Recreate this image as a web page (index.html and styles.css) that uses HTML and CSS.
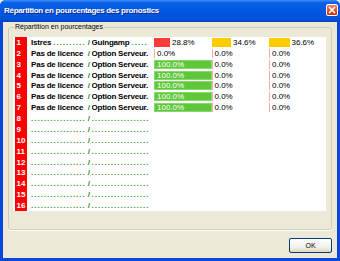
FILE: index.html
```html
<!DOCTYPE html>
<html lang="fr">
<head>
  <meta charset="UTF-8">
  <title>Répartition en pourcentages des pronostics</title>
  <link rel="stylesheet" href="styles.css">
</head>
<body>

<div class="window">
  <div class="titlebar">
    <span class="title">Répartition en pourcentages des pronostics</span>
    <span class="close">
      <svg width="8" height="8" viewBox="0 0 8 8"><path d="M1 1L7 7M7 1L1 7" stroke="#fff" stroke-width="1.6"/></svg>
    </span>
  </div>

  <div class="client">
    <fieldset class="group">
      <legend>Répartition en pourcentages</legend>
      <div class="list">
        <div class="row">
          <span class="num">1</span>
          <span class="team">Istres <span class="dots">..........</span></span>
          <span class="slash">/</span>
          <span class="team team2">Guingamp <span class="dots">.....</span></span>
          <div class="cell"><span class="bar red" style="width:16px"></span><span class="pct">28.8%</span></div>
          <div class="cell"><span class="bar yellow" style="width:19.5px"></span><span class="pct">34.6%</span></div>
          <div class="cell"><span class="bar yellow" style="width:20.5px"></span><span class="pct">36.6%</span></div>
        </div>
        <div class="row">
          <span class="num">2</span>
          <span class="team">Pas de licence</span>
          <span class="slash">/</span>
          <span class="team team2">Option Serveur.</span>
          <div class="cell"><span class="bar zero"></span><span class="pct">0.0%</span></div>
          <div class="cell"><span class="bar zero"></span><span class="pct">0.0%</span></div>
          <div class="cell"><span class="bar zero"></span><span class="pct">0.0%</span></div>
        </div>
        <div class="row">
          <span class="num">3</span>
          <span class="team">Pas de licence</span>
          <span class="slash">/</span>
          <span class="team team2">Option Serveur.</span>
          <div class="cell"><span class="bar green">100.0%</span></div>
          <div class="cell"><span class="bar zero"></span><span class="pct">0.0%</span></div>
          <div class="cell"><span class="bar zero"></span><span class="pct">0.0%</span></div>
        </div>
        <div class="row">
          <span class="num">4</span>
          <span class="team">Pas de licence</span>
          <span class="slash">/</span>
          <span class="team team2">Option Serveur.</span>
          <div class="cell"><span class="bar green">100.0%</span></div>
          <div class="cell"><span class="bar zero"></span><span class="pct">0.0%</span></div>
          <div class="cell"><span class="bar zero"></span><span class="pct">0.0%</span></div>
        </div>
        <div class="row">
          <span class="num">5</span>
          <span class="team">Pas de licence</span>
          <span class="slash">/</span>
          <span class="team team2">Option Serveur.</span>
          <div class="cell"><span class="bar green">100.0%</span></div>
          <div class="cell"><span class="bar zero"></span><span class="pct">0.0%</span></div>
          <div class="cell"><span class="bar zero"></span><span class="pct">0.0%</span></div>
        </div>
        <div class="row">
          <span class="num">6</span>
          <span class="team">Pas de licence</span>
          <span class="slash">/</span>
          <span class="team team2">Option Serveur.</span>
          <div class="cell"><span class="bar green">100.0%</span></div>
          <div class="cell"><span class="bar zero"></span><span class="pct">0.0%</span></div>
          <div class="cell"><span class="bar zero"></span><span class="pct">0.0%</span></div>
        </div>
        <div class="row">
          <span class="num">7</span>
          <span class="team">Pas de licence</span>
          <span class="slash">/</span>
          <span class="team team2">Option Serveur.</span>
          <div class="cell"><span class="bar green">100.0%</span></div>
          <div class="cell"><span class="bar zero"></span><span class="pct">0.0%</span></div>
          <div class="cell"><span class="bar zero"></span><span class="pct">0.0%</span></div>
        </div>
        <div class="row"><span class="num">8</span><span class="team dots">.................</span><span class="slash">/</span><span class="team team2 dots">..................</span></div>
        <div class="row"><span class="num">9</span><span class="team dots">.................</span><span class="slash">/</span><span class="team team2 dots">..................</span></div>
        <div class="row"><span class="num">10</span><span class="team dots">.................</span><span class="slash">/</span><span class="team team2 dots">..................</span></div>
        <div class="row"><span class="num">11</span><span class="team dots">.................</span><span class="slash">/</span><span class="team team2 dots">..................</span></div>
        <div class="row"><span class="num">12</span><span class="team dots">.................</span><span class="slash">/</span><span class="team team2 dots">..................</span></div>
        <div class="row"><span class="num">13</span><span class="team dots">.................</span><span class="slash">/</span><span class="team team2 dots">..................</span></div>
        <div class="row"><span class="num">14</span><span class="team dots">.................</span><span class="slash">/</span><span class="team team2 dots">..................</span></div>
        <div class="row"><span class="num">15</span><span class="team dots">.................</span><span class="slash">/</span><span class="team team2 dots">..................</span></div>
        <div class="row"><span class="num">16</span><span class="team dots">.................</span><span class="slash">/</span><span class="team team2 dots">..................</span></div>
      </div>
    </fieldset>

    <div class="footer">
      <button class="ok">OK</button>
    </div>
  </div>
</div>

</body>
</html>
```

FILE: styles.css
```css
body {
  margin: 0;
  font-family: "Liberation Sans", Arial, sans-serif;
  background: #ece9d8;
}
.window {
  width: 340px;
  height: 261px;
  box-sizing: border-box;
  display: flex;
  flex-direction: column;
  background: #0a46da;
  padding: 0 3px 3px 3px;
  border-radius: 6px 6px 0 0;
}
.titlebar {
  height: 22px;
  margin: 0 -3px;
  padding: 0 2px 0 4px;
  display: flex;
  align-items: center;
  justify-content: space-between;
  background: linear-gradient(#3d8ef9 0%, #0a62ea 12%, #0056e0 50%, #0052d8 88%, #0a3cc0 100%);
  border-radius: 6px 6px 0 0;
}
.title {
  color: #fff;
  font-weight: bold;
  font-size: 8px;
  letter-spacing: -0.3px;
  text-shadow: 1px 1px 0 #0b2a8c;
  margin-top: -2px;
}
.close {
  width: 12px;
  height: 12px;
  box-sizing: border-box;
  border: 1px solid #fff;
  border-radius: 2px;
  background: linear-gradient(#f08a66, #e0471e 60%, #c8360f);
  display: flex;
  align-items: center;
  justify-content: center;
  margin-top: -3px;
}
.client {
  flex: 1;
  background: #ece9d8;
  display: flex;
  flex-direction: column;
}
.group {
  margin: 0 5px;
  padding: 5px 5px 18px 4px;
  border: 1px solid #d0ccb8;
  border-radius: 3px;
  box-shadow: 0 1px 0 #fff;
}
.group legend {
  font-size: 7px;
  line-height: 10px;
  padding: 0 1px;
  margin-left: 1px;
  color: #000;
}
.list {
  background: #fff;
  padding-left: 2px;
}
.row {
  display: flex;
  align-items: center;
  height: 10.875px;
  font-size: 8px;
  white-space: nowrap;
}
.num {
  align-self: stretch;
  width: 12px;
  box-sizing: border-box;
  padding-left: 1.5px;
  background: #ff0000;
  color: #fff;
  font-weight: bold;
  display: flex;
  align-items: center;
}
.team {
  width: 55px;
  margin-left: 4px;
  overflow: hidden;
  font-weight: bold;
  letter-spacing: -0.2px;
}
.team2 {
  width: 62.5px;
  margin-left: 0;
}
.dots {
  color: #2f9a2f;
  font-weight: bold;
  letter-spacing: 1px;
}
.slash {
  width: 5.5px;
  text-align: center;
  color: #1e8a1e;
  font-weight: bold;
}
.cell {
  width: 57.5px;
  height: 9px;
  display: flex;
  align-items: center;
}
.cell:last-child {
  width: 57px;
}
.bar {
  height: 9px;
  box-sizing: border-box;
}
.red {
  background: #ff3a3a;
}
.yellow {
  background: #ffcc00;
}
.zero {
  width: 1px;
  background: #ffa8a8;
}
.green {
  width: 58px;
  background: #5fc83a;
  border: 1px solid #86d96a;
  color: #fff;
  padding-left: 2px;
  line-height: 7px;
}
.pct {
  margin-left: 2px;
}
.footer {
  display: flex;
  justify-content: flex-end;
  padding: 8px 5px 0 0;
}
.ok {
  width: 43px;
  height: 15px;
  padding: 0;
  font-family: "Liberation Sans", Arial, sans-serif;
  font-size: 7px;
  color: #000;
  background: linear-gradient(#fff, #f3f2ea 60%, #dcd8c8);
  border: 1px solid #003c74;
  border-radius: 2px;
}
```
